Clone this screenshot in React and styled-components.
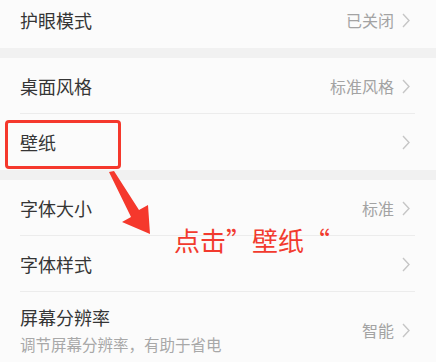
import React from "react";
import styled, { createGlobalStyle } from "styled-components";

const Global = createGlobalStyle`
  html, body { margin: 0; padding: 0; background: #f1f1f1; }
  body { font-family: "Noto Sans CJK SC", "Noto Sans", sans-serif; }
`;

const Page = styled.div`
  position: relative;
  width: 436px;
  height: 362px;
  overflow: hidden;
  background: #f1f1f1;
`;

const Group = styled.div`
  background: #fbfbfb;
  margin-top: ${(p) => (p.$first ? "-8px" : "10px")};
`;

const Row = styled.div`
  position: relative;
  display: flex;
  align-items: center;
  justify-content: space-between;
  height: ${(p) => (p.$tall ? "76px" : "56px")};
  padding: 0 26px 0 20px;
  box-sizing: border-box;
  &:not(:last-child)::after {
    content: "";
    position: absolute;
    left: 20px;
    right: 21px;
    bottom: 0;
    height: 1px;
    background: #ececec;
  }
`;

const Texts = styled.div`
  display: flex;
  flex-direction: column;
  gap: 4px;
`;

const Title = styled.div`
  font-size: 18px;
  line-height: 24px;
  color: #353535;
`;

const Sub = styled.div`
  font-size: 15.5px;
  line-height: 22px;
  color: #a8a8a8;
`;

const Right = styled.div`
  display: flex;
  align-items: center;
  gap: 8px;
`;

const Value = styled.span`
  font-size: 16px;
  line-height: 22px;
  color: #a3a3a3;
`;

const Chevron = () => (
  <svg width="8" height="15" viewBox="0 0 8 15">
    <path d="M1 1 L7 7.5 L1 14" fill="none" stroke="#c6c6c6" strokeWidth="1.4" strokeLinejoin="miter" />
  </svg>
);

const Highlight = styled.div`
  position: absolute;
  left: 5px;
  top: 120px;
  width: 116px;
  height: 49px;
  box-sizing: border-box;
  border: 3px solid #f5382c;
  border-radius: 4px;
`;

const ArrowSvg = styled.svg`
  position: absolute;
  left: 0;
  top: 0;
`;

const Note = styled.div`
  position: absolute;
  left: 174px;
  top: 226px;
  font-size: 26px;
  line-height: 28px;
  color: #f23a2e;
  white-space: nowrap;
`;

const Item = ({ title, sub, value, tall }) => (
  <Row $tall={tall}>
    <Texts>
      <Title>{title}</Title>
      {sub && <Sub>{sub}</Sub>}
    </Texts>
    <Right>
      {value && <Value>{value}</Value>}
      <Chevron />
    </Right>
  </Row>
);

export default function App() {
  return (
    <>
      <Global />
      <Page>
        <Group $first>
          <Item title="护眼模式" value="已关闭" />
        </Group>
        <Group>
          <Item title="桌面风格" value="标准风格" />
          <Item title="壁纸" />
        </Group>
        <Group>
          <Item title="字体大小" value="标准" />
          <Item title="字体样式" />
          <Item title="屏幕分辨率" sub="调节屏幕分辨率，有助于省电" value="智能" tall />
        </Group>
        <Highlight />
        <ArrowSvg width="436" height="362" viewBox="0 0 436 362">
          <polygon
            points="109,172 114,171 139,210 148,205 150,234 122,222 131,217"
            fill="#f5382c"
          />
        </ArrowSvg>
        <Note>点击”壁纸“</Note>
      </Page>
    </>
  );
}
